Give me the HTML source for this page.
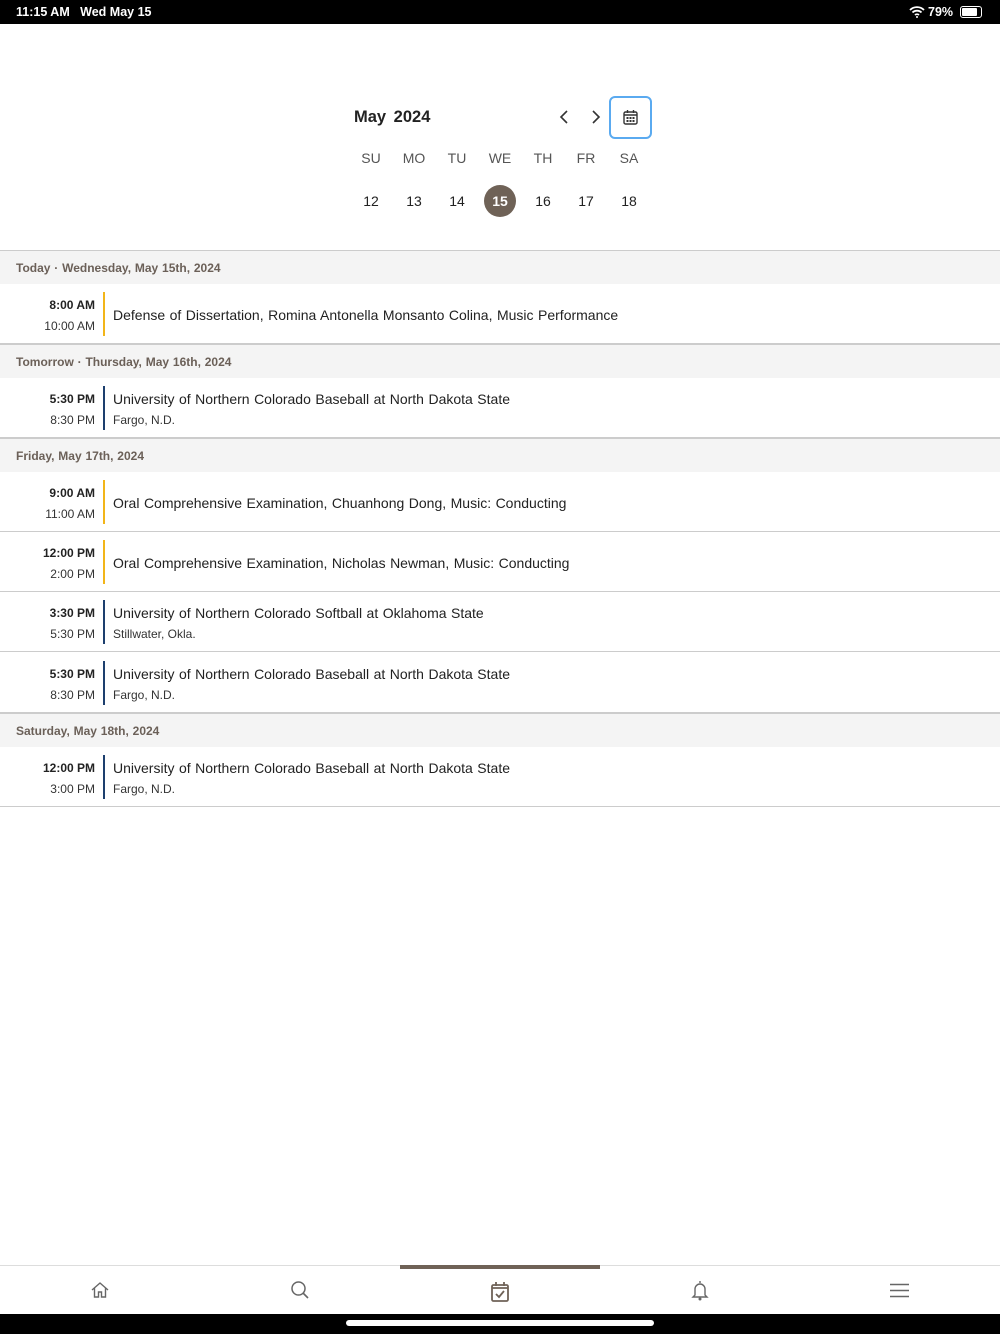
<!DOCTYPE html>
<html><head><meta charset="utf-8"><style>
*{margin:0;padding:0;box-sizing:border-box}
body{width:1000px;height:1334px;position:relative;background:#fff;font-family:"Liberation Sans",sans-serif;color:#222;overflow:hidden}
.a{position:absolute}
.sb{top:0;left:0;width:1000px;height:24px;background:#000;color:#fff;font-size:12.5px;font-weight:bold}
.dow{top:150px;font-size:14px;color:#555;width:40px;text-align:center}
.dn{top:193px;font-size:14px;color:#222;width:40px;text-align:center}
.hd{left:0;width:1000px;height:34px;background:#f4f4f4;border-top:1px solid #ccc;font-size:12px;font-weight:bold;color:#6b6058;padding:10px 16px;word-spacing:0.5px}
.ev{left:0;width:1000px;height:60px;border-bottom:1px solid #ccc}
.t1{position:absolute;right:905px;top:14px;font-size:12px;font-weight:bold;white-space:nowrap}
.t2{position:absolute;right:905px;top:35px;font-size:12px;color:#333;white-space:nowrap}
.bar{position:absolute;left:103px;top:8px;width:2px;height:44px}
.y{background:#f2b519}.n{background:#1d3f6e}
.ti{position:absolute;left:113px;font-size:14px;white-space:nowrap;word-spacing:0.6px}
.lo{position:absolute;left:113px;top:35px;font-size:12px;color:#333}
</style></head><body>
<div class="a sb"><span class="a" style="left:16px;top:5px">11:15 AM&nbsp;&nbsp; Wed May 15</span><span class="a" style="left:928px;top:5px">79%</span>
<svg class="a" style="left:909px;top:6px" width="16" height="12" viewBox="0 0 16 12"><path d="M1 4a10 10 0 0 1 14 0M3.5 6.5a6.5 6.5 0 0 1 9 0M6 9a3 3 0 0 1 4 0" stroke="#fff" stroke-width="1.8" fill="none"/><circle cx="8" cy="11" r="1" fill="#fff"/></svg>
<div class="a" style="left:960px;top:6px;width:22px;height:12px;border:1px solid #fff;border-radius:3px;padding:1px"><div style="width:15px;height:8px;background:#fff;border-radius:1px"></div></div></div>
<div class="a" style="left:354px;top:108px;font-size:16.5px;font-weight:bold;word-spacing:3px">May 2024</div>
<svg class="a" style="left:557px;top:109px" width="14" height="16"><path d="M10 2 4 8l6 6" stroke="#333" stroke-width="1.6" fill="none"/></svg>
<svg class="a" style="left:589px;top:109px" width="14" height="16"><path d="M4 2l6 6-6 6" stroke="#333" stroke-width="1.6" fill="none"/></svg>
<div class="a" style="left:609px;top:96px;width:43px;height:43px;border:2px solid #5aaaf0;border-radius:6px"></div>
<svg class="a" style="left:623px;top:109px" width="15" height="16" viewBox="0 0 15 16"><rect x="1" y="3" width="13" height="12" rx="1.5" stroke="#333" stroke-width="1.4" fill="none"/><path d="M1 6h13M4.5 1v3M10.5 1v3" stroke="#333" stroke-width="1.4"/><g fill="#333"><rect x="3.5" y="8" width="2" height="2"/><rect x="6.5" y="8" width="2" height="2"/><rect x="9.5" y="8" width="2" height="2"/><rect x="3.5" y="11" width="2" height="2"/><rect x="6.5" y="11" width="2" height="2"/><rect x="9.5" y="11" width="2" height="2"/></g></svg>
<div class="a dow" style="left:351px">SU</div><div class="a dow" style="left:394px">MO</div><div class="a dow" style="left:437px">TU</div><div class="a dow" style="left:480px">WE</div><div class="a dow" style="left:523px">TH</div><div class="a dow" style="left:566px">FR</div><div class="a dow" style="left:609px">SA</div>
<div class="a dn" style="left:351px">12</div><div class="a dn" style="left:394px">13</div><div class="a dn" style="left:437px">14</div>
<div class="a" style="left:484px;top:185px;width:32px;height:32px;border-radius:50%;background:#6f6257;color:#fff;font-weight:bold;font-size:14px;text-align:center;line-height:32px">15</div>
<div class="a dn" style="left:523px">16</div><div class="a dn" style="left:566px">17</div><div class="a dn" style="left:609px">18</div>

<div class="a hd" style="top:250px">Today · Wednesday, May 15th, 2024</div>
<div class="a ev" style="top:284px"><div class="t1">8:00 AM</div><div class="t2">10:00 AM</div><div class="bar y"></div><div class="ti" style="top:23px">Defense of Dissertation, Romina Antonella Monsanto Colina, Music Performance</div></div>
<div class="a hd" style="top:344px">Tomorrow · Thursday, May 16th, 2024</div>
<div class="a ev" style="top:378px"><div class="t1">5:30 PM</div><div class="t2">8:30 PM</div><div class="bar n"></div><div class="ti" style="top:13px">University of Northern Colorado Baseball at North Dakota State</div><div class="lo">Fargo, N.D.</div></div>
<div class="a hd" style="top:438px">Friday, May 17th, 2024</div>
<div class="a ev" style="top:472px"><div class="t1">9:00 AM</div><div class="t2">11:00 AM</div><div class="bar y"></div><div class="ti" style="top:23px">Oral Comprehensive Examination, Chuanhong Dong, Music: Conducting</div></div>
<div class="a ev" style="top:532px"><div class="t1">12:00 PM</div><div class="t2">2:00 PM</div><div class="bar y"></div><div class="ti" style="top:23px">Oral Comprehensive Examination, Nicholas Newman, Music: Conducting</div></div>
<div class="a ev" style="top:592px"><div class="t1">3:30 PM</div><div class="t2">5:30 PM</div><div class="bar n"></div><div class="ti" style="top:13px">University of Northern Colorado Softball at Oklahoma State</div><div class="lo">Stillwater, Okla.</div></div>
<div class="a ev" style="top:653px"><div class="t1">5:30 PM</div><div class="t2">8:30 PM</div><div class="bar n"></div><div class="ti" style="top:13px">University of Northern Colorado Baseball at North Dakota State</div><div class="lo">Fargo, N.D.</div></div>
<div class="a hd" style="top:713px">Saturday, May 18th, 2024</div>
<div class="a ev" style="top:747px"><div class="t1">12:00 PM</div><div class="t2">3:00 PM</div><div class="bar n"></div><div class="ti" style="top:13px">University of Northern Colorado Baseball at North Dakota State</div><div class="lo">Fargo, N.D.</div></div>

<div class="a" style="top:1265px;left:0;width:1000px;height:1px;background:#ddd"></div>
<div class="a" style="top:1265px;left:400px;width:200px;height:4px;background:#6f6257"></div>
<svg class="a" style="left:90px;top:1281px" width="20" height="18" viewBox="0 0 20 18"><path d="M2 9 10 2l8 7M4.5 7v9h4v-5h3v5h4V7" stroke="#666" stroke-width="1.4" fill="none"/></svg>
<svg class="a" style="left:290px;top:1280px" width="20" height="20" viewBox="0 0 20 20"><circle cx="8.5" cy="8.5" r="6.5" stroke="#666" stroke-width="1.5" fill="none"/><path d="M13 13l5 5" stroke="#666" stroke-width="1.6"/></svg>
<svg class="a" style="left:490px;top:1281px" width="20" height="22" viewBox="0 0 20 22"><rect x="2" y="4" width="16" height="16" rx="1.5" stroke="#6f6257" stroke-width="1.8" fill="none"/><path d="M2 7h16M6 1v4M14 1v4" stroke="#6f6257" stroke-width="1.8"/><path d="M6 13l3 3 5-6" stroke="#6f6257" stroke-width="1.8" fill="none"/></svg>
<svg class="a" style="left:690px;top:1280px" width="20" height="21" viewBox="0 0 20 21"><path d="M10 1v2M5 15V9a5 5 0 0 1 10 0v6l2 2H3z" stroke="#666" stroke-width="1.4" fill="none"/><circle cx="10" cy="19" r="1.5" fill="#666"/></svg>
<svg class="a" style="left:890px;top:1283px" width="19" height="15" viewBox="0 0 19 15"><path d="M0 1.5h19M0 7.5h19M0 13.5h19" stroke="#666" stroke-width="1.6"/></svg>
<div class="a" style="top:1314px;left:0;width:1000px;height:20px;background:#000"></div>
<div class="a" style="top:1320px;left:346px;width:308px;height:6px;border-radius:3px;background:#fff"></div>
</body></html>
